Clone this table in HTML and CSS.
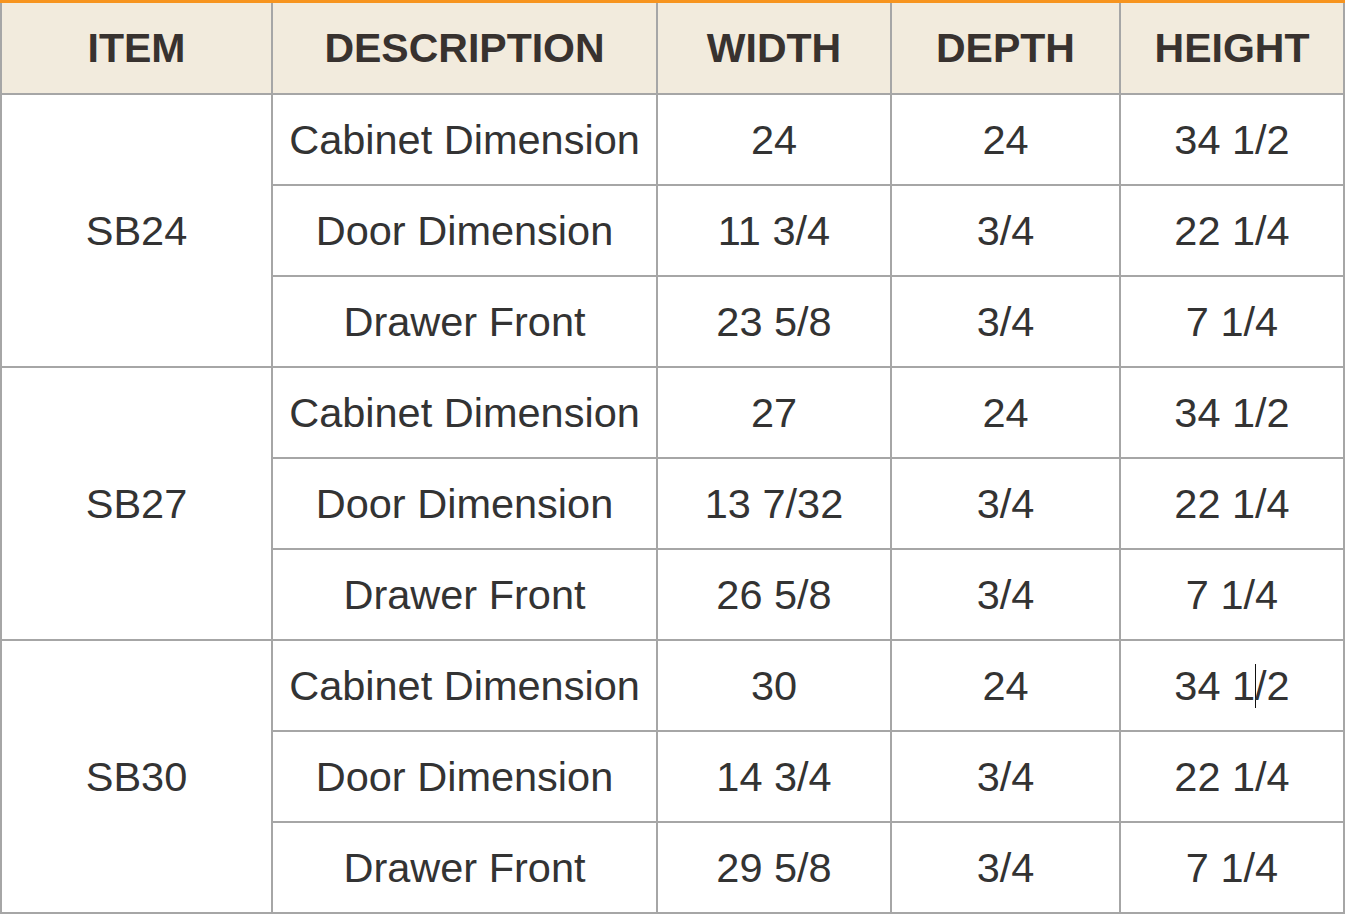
FILE: index.html
```html
<!DOCTYPE html>
<html>
<head>
<meta charset="utf-8">
<link rel="stylesheet" href="styles.css">
</head>
<body>
<table class="spec">
  <colgroup>
    <col class="c-item"><col class="c-desc"><col class="c-w"><col class="c-d"><col class="c-h">
  </colgroup>
  <thead>
    <tr><th>ITEM</th><th>DESCRIPTION</th><th>WIDTH</th><th>DEPTH</th><th>HEIGHT</th></tr>
  </thead>
  <tbody>
    <tr><td rowspan="3">SB24</td><td>Cabinet Dimension</td><td>24</td><td>24</td><td>34 1/2</td></tr>
    <tr><td>Door Dimension</td><td>11 3/4</td><td>3/4</td><td>22 1/4</td></tr>
    <tr><td>Drawer Front</td><td>23 5/8</td><td>3/4</td><td>7 1/4</td></tr>
    <tr><td rowspan="3">SB27</td><td>Cabinet Dimension</td><td>27</td><td>24</td><td>34 1/2</td></tr>
    <tr><td>Door Dimension</td><td>13 7/32</td><td>3/4</td><td>22 1/4</td></tr>
    <tr><td>Drawer Front</td><td>26 5/8</td><td>3/4</td><td>7 1/4</td></tr>
    <tr><td rowspan="3">SB30</td><td>Cabinet Dimension</td><td>30</td><td>24</td><td>34 1<span class="caret"></span>/2</td></tr>
    <tr><td>Door Dimension</td><td>14 3/4</td><td>3/4</td><td>22 1/4</td></tr>
    <tr><td>Drawer Front</td><td>29 5/8</td><td>3/4</td><td>7 1/4</td></tr>
  </tbody>
</table>
</body>
</html>
```
FILE: styles.css
```css
html, body {
  margin: 0;
  padding: 0;
  background: #ffffff;
  overflow: hidden;
}
.spec {
  border-collapse: collapse;
  table-layout: fixed;
  width: 1343px;
  font-family: "Liberation Sans", Arial, sans-serif;
  color: #333333;
}
.c-item { width: 271px; }
.c-desc { width: 385px; }
.c-w { width: 234px; }
.c-d { width: 229px; }
.c-h { width: 224px; }
.spec th, .spec td {
  border: 2px solid #a6a6a6;
  text-align: center;
  vertical-align: middle;
  padding: 0;
}
.spec thead tr {
  height: 92px;
}
.spec th {
  background: #f2ebdd;
  border-top: 3px solid #f7941e;
  font-weight: bold;
  font-size: 41px;
  color: #38322f;
  padding-top: 2px;
}
.spec tbody tr {
  height: 91px;
}
.spec td {
  font-size: 41.5px;
  padding-top: 2px;
}
.caret {
  display: inline-block;
  width: 1px;
  height: 44px;
  background: #111;
  vertical-align: -8px;
  margin-right: -1px;
}
```
